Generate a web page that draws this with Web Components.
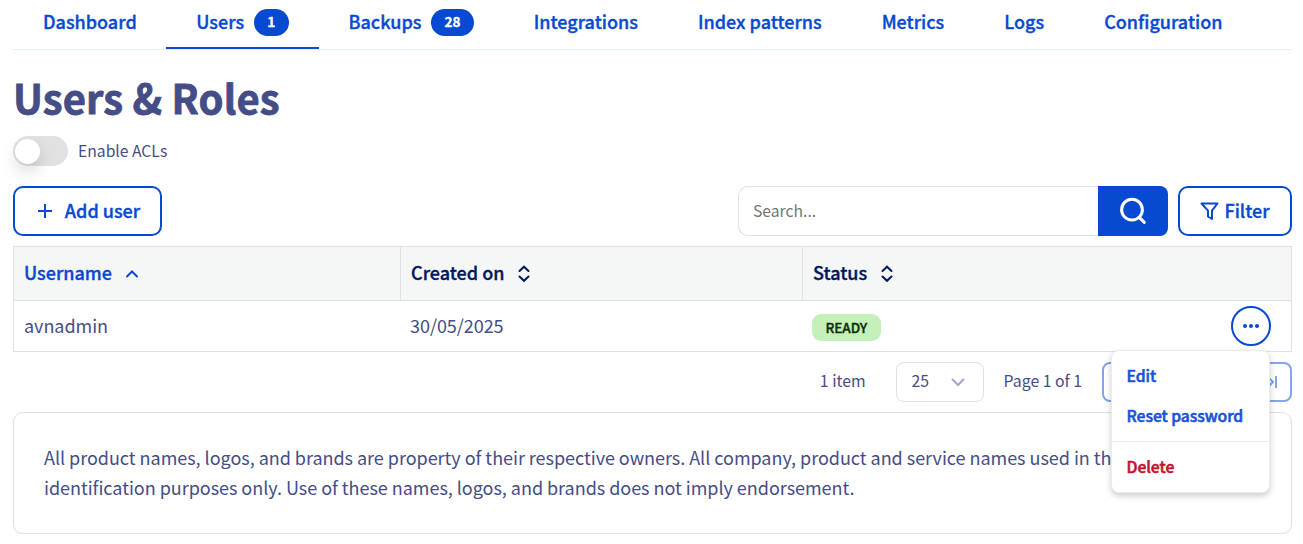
<!DOCTYPE html>
<html lang="en">
<head>
<meta charset="utf-8">
<title>Users &amp; Roles</title>
<style>
    :root {
        --primary: #0849d1;
        --text: #454d87;
        --heading: #00185e;
        --border: #e0e1e1;
        --semibold: .35px;
    }

    body {
        margin: 0;
        overflow: hidden;
        background: #fff;
        color: var(--text);
        font-family: "Noto Sans CJK SC", "Noto Sans", sans-serif;
        font-size: 18px;
        line-height: 30px;
    }
</style>
</head>
<body>
<users-page></users-page>

<script>
class TabItem extends HTMLElement {
    constructor() {
        super();
        this.attachShadow({ mode: 'open' });
    }

    connectedCallback() {
        const count = this.getAttribute('count');

        this.shadowRoot.innerHTML = `
            <style>
                :host {
                    display: flex;
                    align-items: center;
                    gap: 10px;
                    box-sizing: border-box;
                    height: 49px;
                    padding: 0 30px 4px;
                    color: var(--primary);
                    font-weight: 500;
                    -webkit-text-stroke: var(--semibold);
                    white-space: nowrap;
                }
                :host(:first-child) {
                    padding-right: 29.5px;
                }
                :host([active]) {
                    border-bottom: 2px solid var(--primary);
                    padding-bottom: 2px;
                }
                .label {
                    padding-bottom: 3px;
                }
                .count {
                    height: 27px;
                    padding: 0 13.25px;
                    border-radius: 14px;
                    background: var(--primary);
                    color: #fff;
                    font-size: 13.5px;
                    font-weight: 700;
                    line-height: 25px;
                }
            </style>
            <span class="label"><slot></slot></span>
            ${count ? `<span class="count">${count}</span>` : ''}
        `;
    }
}

class ToggleSwitch extends HTMLElement {
    constructor() {
        super();
        this.attachShadow({ mode: 'open' });
        this.shadowRoot.innerHTML = `
            <style>
                :host {
                    display: flex;
                    align-items: center;
                    gap: 10px;
                    height: 30px;
                    font-size: 15.7px;
                }
                .track {
                    box-sizing: border-box;
                    width: 55px;
                    height: 30px;
                    padding: 3px 2px;
                    border-radius: 15px;
                    background: #e1e1e1;
                }
                .knob {
                    width: 25px;
                    height: 25px;
                    border-radius: 50%;
                    background: #fff;
                    box-shadow: 0 8px 16px rgba(0, 0, 0, .14);
                }
                .label {
                    padding-bottom: 1px;
                }
            </style>
            <div class="track"><div class="knob"></div></div>
            <span class="label"><slot></slot></span>
        `;
    }
}

class OutlineButton extends HTMLElement {
    constructor() {
        super();
        this.attachShadow({ mode: 'open' });
        this.shadowRoot.innerHTML = `
            <style>
                :host {
                    display: flex;
                    align-items: center;
                    justify-content: center;
                    box-sizing: border-box;
                    height: 50px;
                    border: 2px solid var(--primary);
                    border-radius: 10px;
                    background: #fff;
                    color: var(--primary);
                    font-weight: 500;
                    -webkit-text-stroke: var(--semibold);
                    white-space: nowrap;
                }
                .label {
                    padding-bottom: 2px;
                }
            </style>
            <slot name="icon"></slot>
            <span class="label"><slot></slot></span>
        `;
    }
}

class SearchBox extends HTMLElement {
    constructor() {
        super();
        this.attachShadow({ mode: 'open' });
    }

    connectedCallback() {
        this.shadowRoot.innerHTML = `
            <style>
                :host {
                    display: flex;
                    width: 430px;
                    height: 50px;
                }
                .field {
                    flex: 1;
                    box-sizing: border-box;
                    padding: 0 14px;
                    border: 1px solid var(--border);
                    border-right: 0;
                    border-radius: 10px 0 0 10px;
                    color: #757575;
                    font-size: 15.7px;
                    line-height: 47px;
                }
                .submit {
                    display: flex;
                    align-items: center;
                    justify-content: center;
                    width: 70px;
                    border-radius: 0 8px 8px 0;
                    background: var(--primary);
                }
            </style>
            <div class="field">${this.getAttribute('placeholder') || ''}</div>
            <div class="submit">
                <svg width="28" height="28" viewBox="0 0 28 28" fill="none" stroke="#fff" stroke-width="3" stroke-linecap="round">
                    <circle cx="13" cy="12.7" r="10.4"/>
                    <path d="M20.5 20.6l4.8 4.8"/>
                </svg>
            </div>
        `;
    }
}

class ColumnHead extends HTMLElement {
    constructor() {
        super();
        this.attachShadow({ mode: 'open' });
    }

    connectedCallback() {
        const asc = this.getAttribute('sort') === 'asc';
        const path = asc ? 'M3 11.5l5-5 5 5' : 'M3.5 6L8 1.7 12.5 6M3.5 11.5L8 15.8l4.5-4.3';

        this.shadowRoot.innerHTML = `
            <style>
                :host {
                    display: flex;
                    align-items: center;
                    gap: 12px;
                    box-sizing: border-box;
                    height: 54px;
                    padding-left: 10px;
                    border-bottom: 1px solid var(--border);
                    background: #f5f7f7;
                    color: var(--heading);
                    font-weight: 500;
                    -webkit-text-stroke: var(--semibold);
                }
                :host([sort="asc"]) {
                    color: var(--primary);
                }
                :host(:not(:first-child)) {
                    border-left: 1px solid var(--border);
                }
                .label {
                    padding-bottom: 3px;
                }
            </style>
            <span class="label"><slot></slot></span>
            <svg width="16" height="18" viewBox="0 0 16 18" fill="none" stroke="currentColor" stroke-width="2" stroke-linecap="round">
                <path d="${path}"/>
            </svg>
        `;
    }
}

class StatusBadge extends HTMLElement {
    constructor() {
        super();
        this.attachShadow({ mode: 'open' });
        this.shadowRoot.innerHTML = `
            <style>
                :host {
                    display: inline-block;
                    margin-top: 2px;
                    padding: 0 13.5px;
                    border-radius: 9px;
                    background: #c6f0b9;
                    color: #0b2f04;
                    font-size: 13.5px;
                    font-weight: 500;
                    -webkit-text-stroke: var(--semibold);
                    line-height: 27px;
                }
            </style>
            <slot></slot>
        `;
    }
}

class ActionMenu extends HTMLElement {
    constructor() {
        super();
        this.attachShadow({ mode: 'open' });
        this.shadowRoot.innerHTML = `
            <style>
                :host {
                    display: block;
                    position: relative;
                    width: 40px;
                    height: 40px;
                }
                .trigger {
                    display: flex;
                    align-items: center;
                    justify-content: center;
                    box-sizing: border-box;
                    width: 40px;
                    height: 40px;
                    border: 2px solid var(--primary);
                    border-radius: 50%;
                    background: #fff;
                }
                .menu {
                    position: absolute;
                    z-index: 1;
                    top: 44px;
                    right: 1px;
                    box-sizing: border-box;
                    width: 159px;
                    padding: 5px 0;
                    border: 1px solid #ececec;
                    border-radius: 8px;
                    background: #fff;
                    box-shadow: 0 3px 6px rgba(0, 0, 0, .2);
                    color: #1852d8;
                    font-size: 15.7px;
                    font-weight: 500;
                    -webkit-text-stroke: .55px;
                    line-height: 40px;
                    white-space: nowrap;
                }
                .menu div {
                    padding-left: 14.5px;
                }
                .menu .delete {
                    margin-top: 5px;
                    padding-top: 5px;
                    border-top: 1px solid #ececec;
                    color: #c4112f;
                }
            </style>
            <div class="trigger">
                <svg width="16" height="4" viewBox="0 0 16 4" fill="var(--primary)">
                    <circle cx="2" cy="2" r="2"/>
                    <circle cx="8" cy="2" r="2"/>
                    <circle cx="14" cy="2" r="2"/>
                </svg>
            </div>
            <div class="menu">
                <div>Edit</div>
                <div>Reset password</div>
                <div class="delete">Delete</div>
            </div>
        `;
    }
}

class TablePagination extends HTMLElement {
    constructor() {
        super();
        this.attachShadow({ mode: 'open' });
        this.shadowRoot.innerHTML = `
            <style>
                :host {
                    display: flex;
                    align-items: center;
                    justify-content: flex-end;
                    height: 40px;
                    font-size: 15.8px;
                    white-space: nowrap;
                }
                span {
                    margin-bottom: 3px;
                }
                .size {
                    display: flex;
                    align-items: center;
                    justify-content: space-between;
                    box-sizing: border-box;
                    width: 88px;
                    height: 40px;
                    margin: 0 20px 0 30px;
                    padding: 0 18px 0 15px;
                    border: 1px solid var(--border);
                    border-radius: 8px;
                }
                .pager {
                    display: flex;
                    align-items: center;
                    justify-content: space-between;
                    box-sizing: border-box;
                    width: 190px;
                    height: 40px;
                    margin-left: 20px;
                    padding: 0 13px;
                    border: 2px solid #83a4e8;
                    border-radius: 8px;
                }
            </style>
            <span>1 item</span>
            <div class="size">
                <span>25</span>
                <svg width="14" height="9" viewBox="0 0 14 9" fill="none" stroke="#a2a6c8" stroke-width="2" stroke-linecap="round">
                    <path d="M1.5 1.5L7 7l5.5-5.5"/>
                </svg>
            </div>
            <span>Page 1 of 1</span>
            <div class="pager">
                <svg width="12" height="14" viewBox="0 0 12 14" fill="none" stroke="#83a4e8" stroke-width="2">
                    <path d="M1 1v12M8.5 2.5L4 7l4.5 4.500"/>
                </svg>
                <svg width="12" height="14" viewBox="0 0 12 14" fill="none" stroke="#83a4e8" stroke-width="2">
                    <path d="M3.5 2.5L8 7l-4.500 4.500M11 1v12"/>
                </svg>
            </div>
        `;
    }
}

class NoticeCard extends HTMLElement {
    constructor() {
        super();
        this.attachShadow({ mode: 'open' });
        this.shadowRoot.innerHTML = `
            <style>
                :host {
                    display: block;
                    box-sizing: border-box;
                    height: 122px;
                    padding: 29px 30px;
                    border: 1px solid var(--border);
                    border-radius: 10px;
                    box-shadow: 0 1px 2px rgba(0, 0, 0, .06);
                    letter-spacing: -.03px;
                    white-space: nowrap;
                }
            </style>
            <slot></slot>
        `;
    }
}

class UsersPage extends HTMLElement {
    constructor() {
        super();
        this.attachShadow({ mode: 'open' });
        this.shadowRoot.innerHTML = `
            <style>
                :host {
                    display: block;
                    padding: 0 11px 0 13px;
                }
                nav {
                    display: flex;
                    border-bottom: 1px solid #e3f1f6;
                }
                h1 {
                    margin: 22px 0 14px;
                    font-size: 40px;
                    font-weight: 700;
                    letter-spacing: .15px;
                    line-height: 50px;
                    -webkit-text-stroke: .8px;
                }
                .toolbar {
                    display: flex;
                    gap: 10px;
                    margin: 20px 0 10px;
                }
                .add {
                    width: 149px;
                    gap: 13px;
                    margin-right: auto;
                    padding-left: 3px;
                }
                .filter {
                    width: 114px;
                    gap: 5px;
                }
                .table {
                    display: grid;
                    grid-template-columns: 386px 402px 1fr;
                    border: 1px solid var(--border);
                }
                .cell {
                    display: flex;
                    align-items: center;
                    height: 50px;
                    padding-left: 10px;
                    letter-spacing: -.05px;
                }
                .cell span {
                    padding-bottom: 2px;
                }
                .last {
                    justify-content: space-between;
                    padding-right: 20px;
                }
                table-pagination {
                    margin: 10px 0;
                }
            </style>
            <nav>
                <tab-item>Dashboard</tab-item>
                <tab-item count="1" active>Users</tab-item>
                <tab-item count="28">Backups</tab-item>
                <tab-item>Integrations</tab-item>
                <tab-item>Index patterns</tab-item>
                <tab-item>Metrics</tab-item>
                <tab-item>Logs</tab-item>
                <tab-item>Configuration</tab-item>
            </nav>
            <h1>Users &amp; Roles</h1>
            <toggle-switch>Enable ACLs</toggle-switch>
            <div class="toolbar">
                <outline-button class="add">
                    <svg slot="icon" width="14" height="14" viewBox="0 0 14 14" stroke="currentColor" stroke-width="2">
                        <path d="M7 0v14M0 7h14"/>
                    </svg>
                    Add user
                </outline-button>
                <search-box placeholder="Search..."></search-box>
                <outline-button class="filter">
                    <svg slot="icon" width="19" height="19" viewBox="0 0 19 19" fill="none" stroke="currentColor" stroke-width="2" stroke-linejoin="round">
                        <path d="M1.5 1.5h16l-5.500 7.200v8.300l-4-2.500V8.700z"/>
                    </svg>
                    Filter
                </outline-button>
            </div>
            <div class="table">
                <column-head sort="asc">Username</column-head>
                <column-head>Created on</column-head>
                <column-head>Status</column-head>
                <div class="cell"><span>avnadmin</span></div>
                <div class="cell"><span>30/05/2025</span></div>
                <div class="cell last">
                    <status-badge>READY</status-badge>
                    <action-menu></action-menu>
                </div>
            </div>
            <table-pagination></table-pagination>
            <notice-card>
                All product names, logos, and brands are property of their respective owners. All company, product and service names used in this website are for<br>
                identification purposes only. Use of these names, logos, and brands does not imply endorsement.
            </notice-card>
        `;
    }
}

customElements.define('tab-item', TabItem);
customElements.define('toggle-switch', ToggleSwitch);
customElements.define('outline-button', OutlineButton);
customElements.define('search-box', SearchBox);
customElements.define('column-head', ColumnHead);
customElements.define('status-badge', StatusBadge);
customElements.define('action-menu', ActionMenu);
customElements.define('table-pagination', TablePagination);
customElements.define('notice-card', NoticeCard);
customElements.define('users-page', UsersPage);
</script>
</body>
</html>
